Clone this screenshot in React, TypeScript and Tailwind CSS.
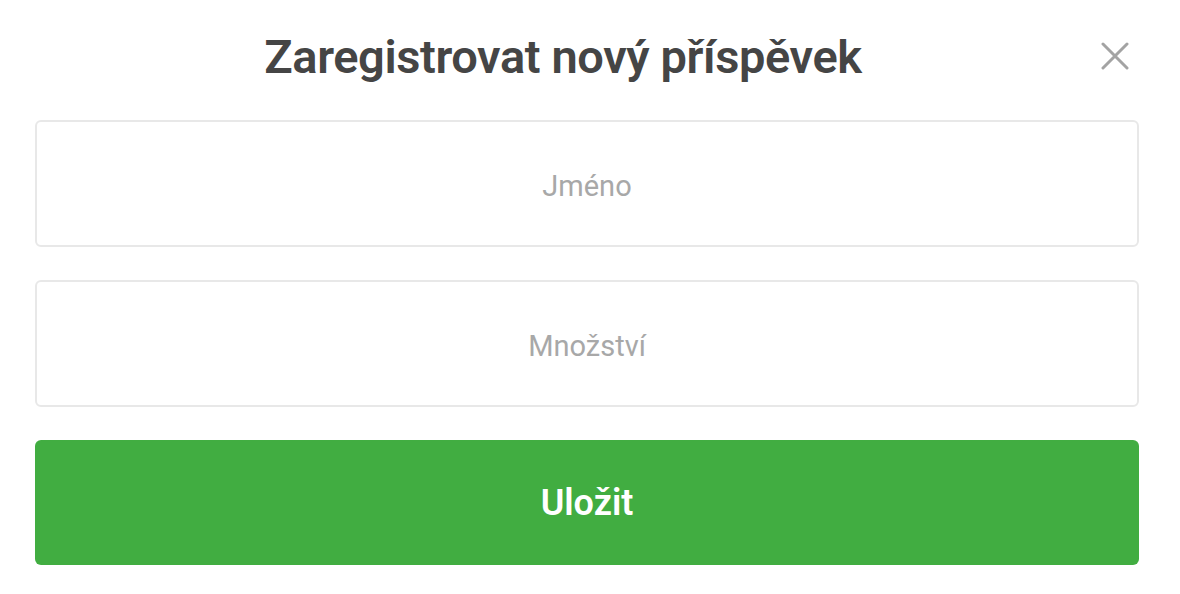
import React from "react";

export default function App() {
  return (
    <div className="w-[1180px] h-[594px] bg-white pl-[35px] pr-[41px] pt-[14px]" style={{ fontFamily: "Roboto, 'Noto Sans', sans-serif" }}>
      <div className="flex items-center h-[84px]">
        <h1 className="flex-1 text-center text-[47px] font-semibold text-[#454545] leading-none tracking-[-0.4px]">
          Zaregistrovat nový příspěvek
        </h1>
        <button className="w-[48px] h-[48px] flex items-center justify-center">
          <svg width="28" height="28" viewBox="0 0 28 28" fill="none" stroke="#a3a3a3" strokeWidth="3" strokeLinecap="round">
            <path d="M2 2 L26 26 M26 2 L2 26" />
          </svg>
        </button>
      </div>
      <div className="mt-[22px] flex flex-col gap-[33px]">
        <input
          placeholder="Jméno"
          className="w-full h-[127px] border-2 border-[#e8e8e8] rounded-[6px] pt-[5px] text-center text-[29px] text-[#444] placeholder:text-[#a8a8a8] outline-none"
        />
        <input
          placeholder="Množství"
          className="w-full h-[127px] border-2 border-[#e8e8e8] rounded-[6px] pt-[5px] text-center text-[29px] text-[#444] placeholder:text-[#a8a8a8] outline-none"
        />
        <button className="w-full h-[125px] rounded-[6px] bg-[#41ad41] text-white text-[36px] font-semibold">
          Uložit
        </button>
      </div>
    </div>
  );
}
